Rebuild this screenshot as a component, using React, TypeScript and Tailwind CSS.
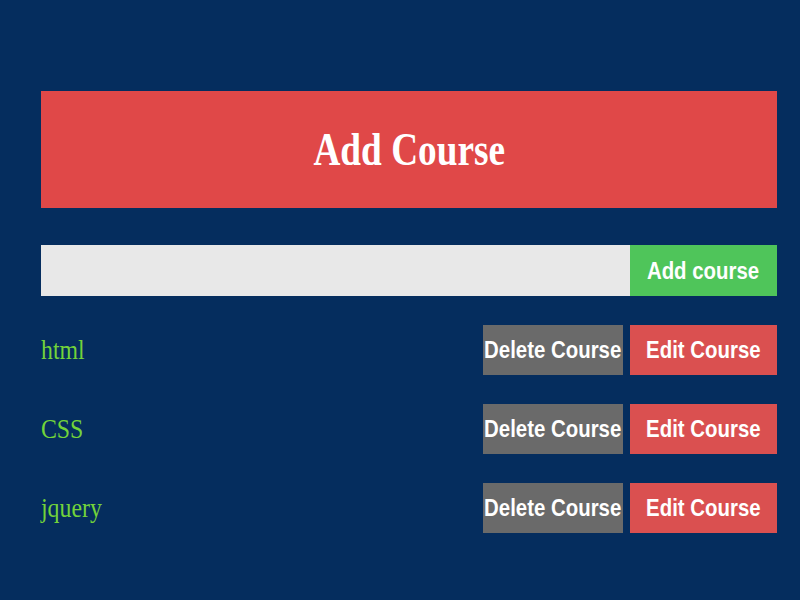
import { useState } from 'react';

const serif = { fontFamily: '"Liberation Serif", "Times New Roman", serif' };
const sans = { fontFamily: '"Liberation Sans", Arial, sans-serif' };

function CourseRow({ name }: { name: string }) {
  return (
    <div className="flex h-[50px] items-center">
      <span
        className="inline-block flex-1 origin-left scale-x-[0.85] text-[28px] text-[#72d33a]"
        style={serif}
      >
        {name}
      </span>
      <button
        className="flex h-[50px] w-[140px] items-center justify-center bg-[#6a6a6a] text-white"
        style={sans}
      >
        <span className="inline-block scale-x-[0.85] whitespace-nowrap text-[24px] font-bold">
          Delete Course
        </span>
      </button>
      <button
        className="ml-[7px] flex h-[50px] w-[147px] items-center justify-center bg-[#da5050] text-white"
        style={sans}
      >
        <span className="inline-block scale-x-[0.85] whitespace-nowrap text-[24px] font-bold">
          Edit Course
        </span>
      </button>
    </div>
  );
}

export default function App() {
  const [courses] = useState(['html', 'CSS', 'jquery']);
  const [value, setValue] = useState('');

  return (
    <div className="min-h-[600px] w-full bg-[#052d5e] pl-[41px] pr-[23px] pt-[91px]">
      <div className="flex h-[117px] items-center justify-center bg-[#e04848]">
        <h1
          className="inline-block scale-x-[0.81] text-[46px] font-bold text-white"
          style={serif}
        >
          Add Course
        </h1>
      </div>

      <div className="mt-[37px] flex h-[51px]">
        <input
          className="h-full flex-1 bg-[#e8e8e8] px-3 outline-none"
          value={value}
          onChange={(e) => setValue(e.target.value)}
        />
        <button
          className="flex h-full w-[147px] items-center justify-center bg-[#4fc55a] text-white"
          style={sans}
        >
          <span className="inline-block scale-x-[0.85] whitespace-nowrap text-[24px] font-bold">
            Add course
          </span>
        </button>
      </div>

      <div className="mt-[29px] flex flex-col gap-[29px]">
        {courses.map((c) => (
          <CourseRow key={c} name={c} />
        ))}
      </div>
    </div>
  );
}
